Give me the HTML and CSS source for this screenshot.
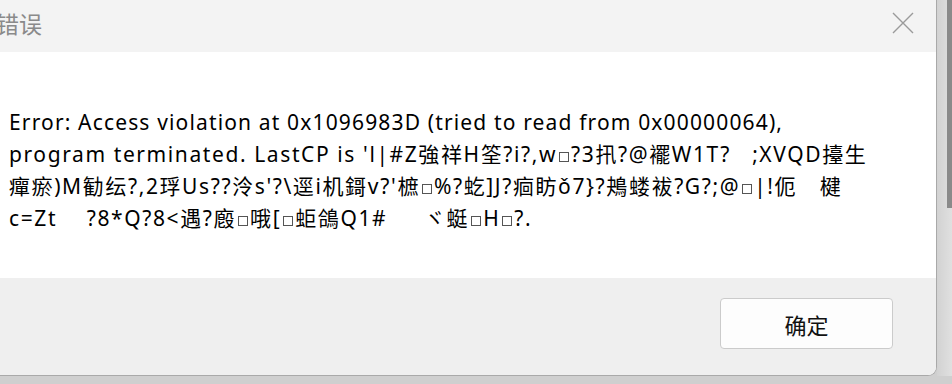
FILE: index.html
```html
<!DOCTYPE html>
<html lang="zh-CN">
<head>
    <meta charset="UTF-8">
    <title>错误</title>
    <link rel="stylesheet" href="styles.css">
</head>
<body>
    <div class="dialog">
        <div class="titlebar">
            <span class="title">错误</span>
            <svg class="close" width="22" height="22" viewBox="0 0 22 22">
                <path d="M1 1L21 21M21 1L1 21" stroke="#9a9a9a" stroke-width="1.4" fill="none"/>
            </svg>
        </div>
        <div class="message">
            <div class="line first">Error: Access violation at 0x1096983D (tried to read from 0x00000064),</div>
            <div class="line">program terminated. LastCP is 'l|#Z強祥H筌?i?,w<span class="box"></span>?3扟?@襬W1T?   ;XVQD擡生</div>
            <div class="line">癉瘀)M勧纭?,2琈Us??泠s'?\逕i机鎶v?'樜<span class="box"></span>%?虼]J?痐眆ǒ7}?鴂蝼袚?G?;@<span class="box"></span>|!伌&#12288;楗</div>
            <div class="line">c=Zt&#12288; ?8*Q?8&lt;遇?廏<span class="box"></span>哦[<span class="box"></span>蚷鴿Q1#&#12288;  ヾ蜓<span class="box"></span>H<span class="box"></span>?.</div>
        </div>
        <div class="footer">
            <button class="btn">确定</button>
        </div>
    </div>
    <div class="side">
        <div class="thumb"></div>
    </div>
</body>
</html>
```

FILE: styles.css
```css
html, body { margin: 0; height: 100%; overflow: hidden; }
body {
    display: flex;
    align-items: flex-start;
    background: #cfcfcf;
    font-family: "Noto Sans", "Noto Sans CJK SC", sans-serif;
}
.dialog {
    width: 948px;
    margin-left: -12px;
    margin-top: -8px;
    flex-shrink: 0;
    border-right: 1px solid #a9a9a9;
    border-bottom: 1px solid #a9a9a9;
    border-radius: 0 9px 9px 0;
    overflow: hidden;
    background: #fff;
}
.titlebar {
    height: 60px;
    background: #f3f3f3;
    display: flex;
    align-items: center;
    justify-content: space-between;
    padding: 2px 22px 0 8px;
    box-sizing: border-box;
}
.title { font-size: 23px; color: #8a8a8a; }
.close { display: block; }
.message {
    height: 226px;
    box-sizing: border-box;
    padding: 54px 0 0 21px;
    font-size: 21px;
    line-height: 32px;
    color: #000;
}
.line { white-space: pre; letter-spacing: 1.6px; }
.line.first { letter-spacing: 1.15px; }
.box {
    display: inline-block;
    width: 8px;
    height: 8px;
    border: 1px solid #555;
    margin: 0 2px;
    vertical-align: 0;
}
.footer {
    height: 97px;
    background: #efefef;
    display: flex;
    justify-content: flex-end;
    align-items: flex-start;
    padding: 20px 43px 0 0;
    box-sizing: border-box;
}
.btn {
    width: 173px;
    height: 51px;
    background: #fdfdfd;
    border: 1px solid #cbcbcb;
    border-radius: 4px;
    font-family: "Noto Sans CJK SC", sans-serif;
    font-size: 22px;
    color: #111;
}
.side {
    flex: 1;
    height: 376px;
    background: linear-gradient(to right, #d2d2d2, #e0e0e0);
    display: flex;
    justify-content: flex-end;
}
.thumb { width: 5px; height: 208px; background: #8a8a8a; }
```
